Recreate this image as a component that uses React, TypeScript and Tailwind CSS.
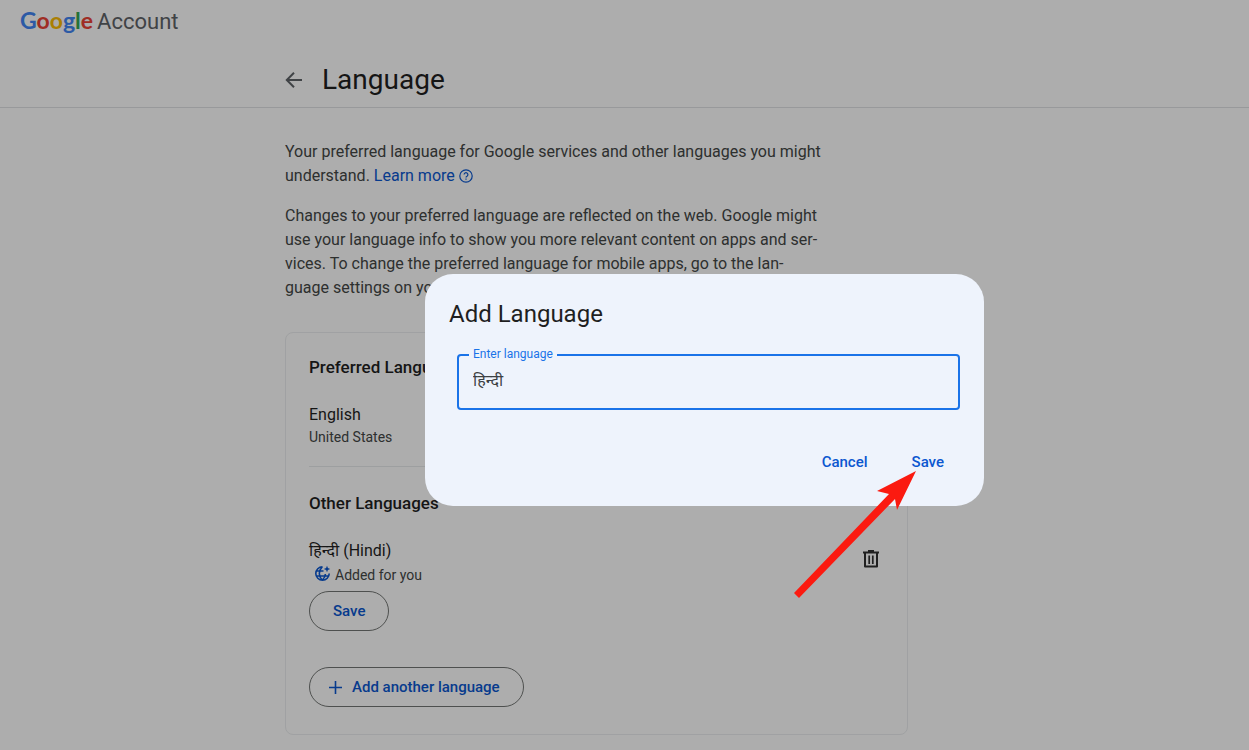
import { useState } from 'react';

const logoLetters = [
  { char: 'G', color: 'text-[#4285f4]' },
  { char: 'o', color: 'text-[#ea4335]' },
  { char: 'o', color: 'text-[#fbbc05]' },
  { char: 'g', color: 'text-[#4285f4]' },
  { char: 'l', color: 'text-[#34a853]' },
  { char: 'e', color: 'text-[#ea4335]' },
];

function Header() {
  return (
    <header className="border-b border-[#e0e2e5]">
      <div className="flex h-[52px] items-baseline gap-1 px-5 pt-1 leading-8">
        <span className="font-['Lato','Roboto',sans-serif] text-[23px] font-bold">
          {logoLetters.map((letter, idx) => (
            <span key={idx} className={letter.color}>{letter.char}</span>
          ))}
        </span>
        <span className="text-[22px] text-[#5f6368]">Account</span>
      </div>
      <div className="flex h-[55px] items-center gap-[19px] pl-[285px]">
        <button type="button" aria-label="Back" className="text-[#5f6368]">
          <svg width="18" height="18" viewBox="0 0 18 18" fill="none" stroke="currentColor" strokeWidth="2">
            <path d="M17 9H2.500M9 1.800 1.800 9 9 16.200" />
          </svg>
        </button>
        <h1 className="text-[28px] leading-9 text-[#1f1f1f]">Language</h1>
      </div>
    </header>
  );
}

function Intro() {
  return (
    <div className="space-y-4 text-base leading-6 text-[#444746]">
      <p>
        Your preferred language for Google services and other languages you might
        <br />
        understand.{' '}
        <a href="#learn" className="inline-flex items-center gap-1 text-[#0b57d0]">
          Learn more
          <svg width="14" height="14" viewBox="0 0 14 14" fill="none" stroke="currentColor" strokeWidth="1.2">
            <circle cx="7" cy="7" r="6.200" />
            <path d="M5.100 5.600a1.900 1.900 0 1 1 2.900 1.600c-.7.400-1 .7-1 1.300M7 9.600v1.200" />
          </svg>
        </a>
      </p>
      <p>
        Changes to your preferred language are reflected on the web. Google might
        <br />
        use your language info to show you more relevant content on apps and ser-
        <br />
        vices. To change the preferred language for mobile apps, go to the lan-
        <br />
        guage settings on your device.
      </p>
    </div>
  );
}

function LanguageCard() {
  return (
    <section className="mt-8 rounded-lg border border-[#eceef0] px-[23px] pt-[22px] pb-[27px]">
      <h2 className="text-[17px] leading-6 font-medium text-[#1f1f1f]">Preferred Language</h2>
      <div className="mt-6 border-b border-[#e8eaec] pb-[19px]">
        <p className="text-base leading-6 text-[#1f1f1f]">English</p>
        <p className="text-sm leading-5 text-[#444746]">United States</p>
      </div>

      <h2 className="mt-6 text-[17px] leading-6 font-medium text-[#1f1f1f]">Other Languages</h2>
      <div className="mt-6 flex items-start justify-between">
        <div>
          <p className="text-base leading-6 text-[#1f1f1f]">हिन्दी (Hindi)</p>
          <p className="flex items-center gap-1 pl-[5px] text-sm leading-6 text-[#444746]">
            <svg className="-mt-1" width="17" height="17" viewBox="0 0 17 17" fill="none" stroke="#0b57d0" strokeWidth="1.6">
              <path d="M8.500 1.800A6.700 6.700 0 1 0 15.200 8.500M2.200 6H9.500M2 11H14.800M8.300 15.200C6.200 13 5.300 10.800 5.300 8.500S6.200 4 8.300 1.800M8.300 15.200c2-2 3-4 3.100-6.200" />
              <path d="M13 .8l.9 2.300 2.300.9-2.300.9L13 7.200l-.9-2.300L9.800 4l2.300-.9z" fill="#0b57d0" stroke="none" />
            </svg>
            Added for you
          </p>
          <button type="button" className="mt-1 h-10 rounded-full border border-[#747775] px-[23px] text-[15px] font-medium text-[#0b57d0]">
            Save
          </button>
        </div>
        <button type="button" aria-label="Remove Hindi" className="mt-[11px] mr-1 text-[#303030]">
          <svg width="18" height="18" viewBox="0 0 18 18" fill="none" stroke="currentColor" strokeWidth="2">
            <path d="M1 2.500h16M6 1h6" />
            <path d="M3 2.500V16.500h12V2.500" strokeLinejoin="round" />
            <path d="M7.200 5.500v8.500M10.800 5.500v8.500" strokeWidth="1.700" />
          </svg>
        </button>
      </div>

      <button type="button" className="mt-9 flex h-10 items-center gap-[10px] rounded-full border border-[#747775] pr-[23px] pl-[19px] text-[15px] font-medium text-[#0b57d0]">
        <svg width="13" height="13" viewBox="0 0 13 13" stroke="currentColor" strokeWidth="1.6">
          <path d="M6.500 0v13M0 6.500h13" />
        </svg>
        Add another language
      </button>
    </section>
  );
}

function AddLanguageDialog() {
  const [language, setLanguage] = useState('हिन्दी');

  return (
    <div className="fixed inset-0 flex items-center justify-center bg-black/32 pt-[30px] pl-40">
      <div role="dialog" aria-labelledby="dialog-title" className="relative w-full max-w-[559px] rounded-[28px] bg-[#eef3fc] px-6 pt-6 pb-6">
        <h2 id="dialog-title" className="text-2xl leading-8 text-[#1f1f1f]">Add Language</h2>
        <div className="relative mt-6 ml-2">
          <label htmlFor="language" className="absolute -top-2 left-3 bg-[#eef3fc] px-1 text-xs leading-4 text-[#1a73e8]">
            Enter language
          </label>
          <input
            id="language"
            type="text"
            value={language}
            onChange={(e) => setLanguage(e.target.value)}
            className="h-14 w-full rounded-sm border-2 border-[#1a73e8] px-[14px] pb-1 text-base text-[#3c4043] outline-none"
          />
        </div>
        <div className="mt-8 flex justify-end gap-5 pr-1 text-[15px] font-medium text-[#0b57d0]">
          <button type="button" className="h-10 px-3">Cancel</button>
          <button type="button" className="h-10 px-3">Save</button>
        </div>

        {/* Pointer to the Save button */}
        <svg className="pointer-events-none absolute top-[196px] right-[66px]" width="124" height="130" viewBox="0 0 124 130" fill="#fb1a10">
          <path d="M122 1 83 21l12 3L0 123l5 5 96-99 2 11z" />
        </svg>
      </div>
    </div>
  );
}

export default function App() {
  return (
    <div className="min-h-screen bg-white font-['Roboto','Noto_Sans',sans-serif]">
      <Header />
      <main className="ml-[285px] max-w-[623px] pt-8">
        <Intro />
        <LanguageCard />
      </main>
      <AddLanguageDialog />
    </div>
  );
}
